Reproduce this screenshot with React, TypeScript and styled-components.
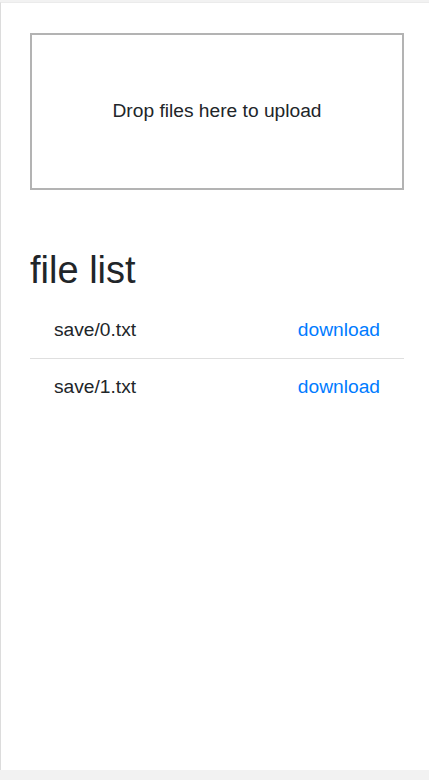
import styled, { createGlobalStyle } from "styled-components";

const GlobalStyle = createGlobalStyle`
    html, body {
        margin: 0;
        padding: 0;
        background: #f2f2f2;
    }
    body {
        font-family: "Liberation Sans", Arial, sans-serif;
        color: #212529;
    }
`;

const Page = styled.div`
    margin-top: 2px;
    height: 768px;
    background: #fff;
    border-left: 1px solid #dcdcdc;
    border-top: 1px solid #ebebeb;
    box-sizing: border-box;
    padding: 30px 25px 0 29px;
`;

const DropZone = styled.div`
    height: 157px;
    border: 2px solid #b3b3b3;
    box-sizing: border-box;
    display: flex;
    align-items: center;
    justify-content: center;
    padding-bottom: 2px;
    font-size: 19.2px;
    color: #212529;
`;

const Title = styled.h1`
    margin: 58px 0 8px;
    font-size: 38px;
    font-weight: 500;
    line-height: 1.2;
    color: #212529;
`;

const List = styled.ul`
    list-style: none;
    margin: 0;
    padding: 0;
`;

const Item = styled.li`
    display: flex;
    justify-content: space-between;
    align-items: center;
    padding: 14px 24px;
    font-size: 19.2px;
    line-height: 28px;
    border-top: 1px solid #dfdfdf;

    &:first-child {
        border-top: none;
    }
`;

const Link = styled.a`
    color: #007bff;
    text-decoration: none;
`;

const files = ["save/0.txt", "save/1.txt"];

function App() {
    return (
        <>
            <GlobalStyle />
            <Page>
                <DropZone>Drop files here to upload</DropZone>
                <Title>file list</Title>
                <List>
                    {files.map((f) => (
                        <Item key={f}>
                            <span>{f}</span>
                            <Link href="#">download</Link>
                        </Item>
                    ))}
                </List>
            </Page>
        </>
    );
}

export default App;
